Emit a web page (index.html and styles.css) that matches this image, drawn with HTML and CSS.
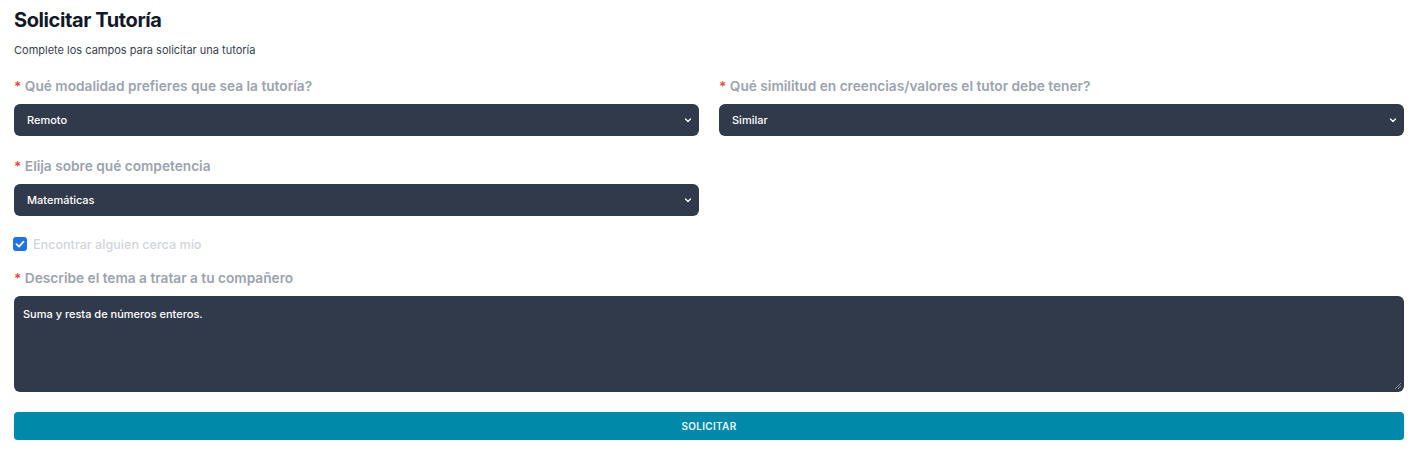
FILE: index.html
```html
<!DOCTYPE html>
<html lang="es">
<head>
<meta charset="utf-8">
<title>Solicitar Tutoría</title>
<link rel="stylesheet" href="styles.css">
</head>
<body>
<main class="page">
  <h1 class="title">Solicitar Tutoría</h1>
  <p class="subtitle">Complete los campos para solicitar una tutoría</p>
  <form class="form">
    <div class="grid">
      <div class="field">
        <label class="label"><span class="req">*</span> Qué modalidad prefieres que sea la tutoría?</label>
        <div class="select"><span>Remoto</span>
          <svg class="chev" viewBox="0 0 10 10" width="10" height="10"><path d="M2.5 4 L5 6.5 L7.5 4" fill="none" stroke="#fff" stroke-width="1.3" stroke-linecap="round" stroke-linejoin="round"/></svg>
        </div>
      </div>
      <div class="field">
        <label class="label"><span class="req">*</span> Qué similitud en creencias/valores el tutor debe tener?</label>
        <div class="select"><span>Similar</span>
          <svg class="chev" viewBox="0 0 10 10" width="10" height="10"><path d="M2.5 4 L5 6.5 L7.5 4" fill="none" stroke="#fff" stroke-width="1.3" stroke-linecap="round" stroke-linejoin="round"/></svg>
        </div>
      </div>
      <div class="field">
        <label class="label"><span class="req">*</span> Elija sobre qué competencia</label>
        <div class="select"><span>Matemáticas</span>
          <svg class="chev" viewBox="0 0 10 10" width="10" height="10"><path d="M2.5 4 L5 6.5 L7.5 4" fill="none" stroke="#fff" stroke-width="1.3" stroke-linecap="round" stroke-linejoin="round"/></svg>
        </div>
      </div>
    </div>
    <div class="check-row">
      <span class="checkbox">
        <svg viewBox="0 0 14 14" width="14" height="14"><path d="M3.5 7.2 L6 9.6 L10.5 4.6" fill="none" stroke="#fff" stroke-width="1.8" stroke-linecap="round" stroke-linejoin="round"/></svg>
      </span>
      <span class="check-label">Encontrar alguien cerca mío</span>
    </div>
    <div class="field">
      <label class="label"><span class="req">*</span> Describe el tema a tratar a tu compañero</label>
      <div class="textarea">Suma y resta de números enteros.
        <svg class="grip" viewBox="0 0 10 10" width="10" height="10"><path d="M9 3 L3 9 M9 6 L6 9" stroke="#8a919c" stroke-width="1" fill="none"/></svg>
      </div>
    </div>
    <div class="button">SOLICITAR</div>
  </form>
</main>
</body>
</html>
```

FILE: styles.css
```css
* { box-sizing: border-box; }
html, body { margin: 0; padding: 0; background: #fff; }
body {
  font-family: Inter, "Noto Sans", "Liberation Sans", sans-serif;
  color: #111827;
}
.page { padding: 6px 15px 0 14px; }
.title {
  margin: 0;
  font-size: 20px;
  line-height: 28px;
  font-weight: 700;
  color: #111827;
  letter-spacing: -0.4px;
}
.subtitle {
  margin: 8px 0 0 0;
  font-size: 11px;
  line-height: 16px;
  color: #374151;
}
.form { margin-top: 18px; }
.grid {
  display: grid;
  grid-template-columns: 1fr 1fr;
  column-gap: 20px;
  row-gap: 20px;
}
.field { display: flex; flex-direction: column; }
.label {
  font-size: 13.7px;
  line-height: 20px;
  font-weight: 600;
  color: #9ca3af;
  margin-bottom: 8px;
}
.req { color: #ef4444; }
.select {
  height: 32px;
  background: #313a4a;
  border-radius: 6px;
  color: #fff;
  font-size: 11px;
  font-weight: 500;
  display: flex;
  align-items: center;
  justify-content: space-between;
  padding: 0 6px 0 13px;
}
.chev { display: block; }
.check-row {
  display: flex;
  align-items: center;
  gap: 6px;
  height: 20px;
  margin-top: 18px;
  margin-bottom: 14px;
}
.checkbox {
  width: 14px;
  height: 14px;
  border-radius: 3px;
  background: #1a73e8;
  display: flex;
  margin-left: -1px;
}
.check-label {
  font-size: 12.6px;
  font-weight: 500;
  color: #d1d5db;
}
.textarea {
  position: relative;
  height: 96px;
  background: #313a4a;
  border-radius: 6px;
  color: #fff;
  font-size: 11px;
  font-weight: 500;
  padding: 11px 9px;
  line-height: 14px;
}
.grip { position: absolute; right: 2px; bottom: 2px; }
.button {
  margin-top: 20px;
  height: 28px;
  background: #0189a9;
  border-radius: 4px;
  color: #eaf6fa;
  font-size: 10px;
  font-weight: 600;
  letter-spacing: 0.3px;
  display: flex;
  align-items: center;
  justify-content: center;
  box-shadow: 0 2px 3px rgba(0,0,0,0.12);
}
```
